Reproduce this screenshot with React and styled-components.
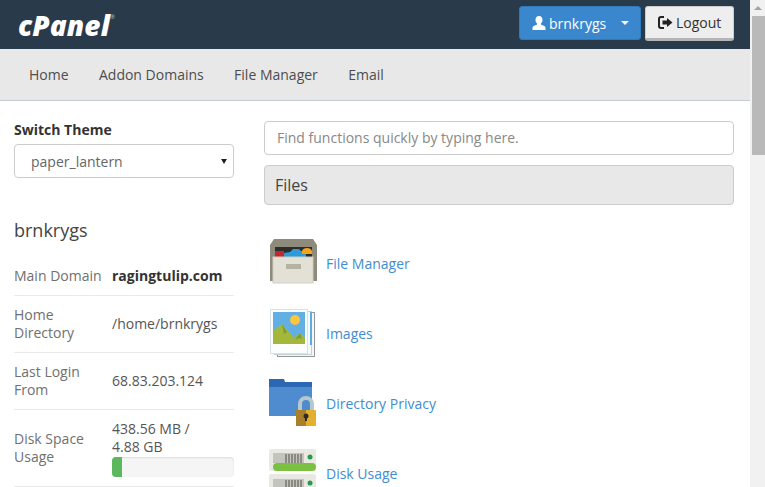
import styled, { createGlobalStyle } from 'styled-components'

const Global = createGlobalStyle`
  html, body { margin: 0; padding: 0; height: 100%; overflow: hidden; background: #fff; }
  body { font-family: "Open Sans", sans-serif; font-size: 14px; color: #444; }
  * { box-sizing: border-box; }
`

const Shell = styled.div`
  display: flex;
  width: 765px;
  height: 487px;
  overflow: hidden;
`
const Page = styled.div`
  width: 750px;
  height: 487px;
  overflow: hidden;
`
const Scrollbar = styled.div`
  width: 15px;
  background: #f1f1f1;
  display: flex;
  flex-direction: column;
  align-items: flex-end;
`
const ScrollArrow = styled.div`
  height: 16px;
  width: 15px;
  display: flex;
  align-items: center;
  justify-content: center;
  &::before {
    content: '';
    border-left: 4px solid transparent;
    border-right: 4px solid transparent;
    border-bottom: 4px solid #a3a3a3;
  }
`
const ScrollThumb = styled.div`
  width: 13px;
  height: 139px;
  background: #b9b9b9;
`

const Header = styled.header`
  height: 49px;
  background: #293a4a;
  display: flex;
  align-items: flex-start;
  justify-content: space-between;
  padding: 6px 16px 0 18px;
`
const Logo = styled.div`
  margin-top: 3px;
  font-size: 28px;
  line-height: 32px;
  font-weight: 800;
  font-style: italic;
  letter-spacing: 0.1px;
  color: #fff;
  sup {
    font-size: 6px;
    font-weight: 400;
    font-style: normal;
    color: #b8c0c8;
    vertical-align: 17px;
    line-height: 0;
  }
`
const HeaderActions = styled.div`
  display: flex;
  gap: 4px;
`
const UserButton = styled.div`
  width: 122px;
  height: 34px;
  background: #3a87cd;
  border: 1px solid #2f79bd;
  border-radius: 3px;
  color: #fff;
  display: flex;
  align-items: center;
  padding-left: 12px;
  gap: 3px;
`
const Caret = styled.span`
  margin-left: 12px;
  border-left: 4px solid transparent;
  border-right: 4px solid transparent;
  border-top: 4px solid #fff;
`
const LogoutButton = styled.div`
  width: 89px;
  height: 35px;
  background: #eee;
  border: 1px solid #ccc;
  border-bottom: 3px solid #b5b5b5;
  border-radius: 3px;
  color: #333;
  display: flex;
  align-items: center;
  padding-left: 12px;
  gap: 3px;
`

const Nav = styled.nav`
  height: 52px;
  background: #e8e8e8;
  border-bottom: 1px solid #c5ccd3;
  display: flex;
  align-items: center;
  gap: 30.4px;
  padding: 0 0 1px 29px;
  a { color: #4d4d4d; }
`

const Content = styled.div`
  display: grid;
  grid-template-columns: 220px 470px;
  column-gap: 30px;
  padding: 0 16px 0 14px;
`
const Sidebar = styled.aside`
  padding-top: 19px;
`
const FieldLabel = styled.div`
  font-weight: 700;
  line-height: 20px;
  color: #333;
  margin-bottom: 4px;
`
const ThemeSelect = styled.div`
  height: 34px;
  border: 1px solid #ccc;
  border-radius: 4px;
  color: #666;
  display: flex;
  align-items: center;
  justify-content: space-between;
  padding: 0 6px 0 16px;
  &::after {
    content: '';
    border-left: 3px solid transparent;
    border-right: 3px solid transparent;
    border-top: 5px solid #222;
  }
`
const UserName = styled.h3`
  margin: 39px 0 13px;
  font-size: 18px;
  font-weight: 400;
  line-height: 26px;
  color: #444;
`
const StatRow = styled.div`
  display: grid;
  grid-template-columns: 98px 1fr;
  align-items: center;
  min-height: ${p => p.$h}px;
  border-bottom: 1px solid #e9e9e9;
  line-height: 18px;
`
const StatLabel = styled.div`
  color: #707070;
`
const StatValue = styled.div`
  color: ${p => (p.$bold ? '#333' : '#555')};
  font-weight: ${p => (p.$bold ? 700 : 400)};
`
const Progress = styled.div`
  height: 20px;
  margin-top: 1px;
  background: #f5f5f5;
  border-radius: 4px;
  box-shadow: inset 0 1px 2px rgba(0, 0, 0, 0.1);
  overflow: hidden;
`
const ProgressFill = styled.div`
  height: 100%;
  background: #5cb85c;
`

const Main = styled.main`
  padding-top: 20px;
`
const Search = styled.div`
  height: 34px;
  border: 1px solid #ccc;
  border-radius: 4px;
  color: #888;
  display: flex;
  align-items: center;
  padding: 0 0 2px 12px;
  margin-bottom: 10px;
`
const SectionHead = styled.div`
  height: 40px;
  background: #e8e8e8;
  border: 1px solid #ccc;
  border-radius: 4px;
  display: flex;
  align-items: center;
  padding-left: 10px;
  font-size: 16px;
  color: #444;
  margin-bottom: 23px;
`
const Feature = styled.a`
  display: flex;
  align-items: center;
  height: 70px;
  gap: 8px;
  padding-left: 4px;
  color: #3f8dd0;
  svg { flex: none; display: block; }
`

const UserIcon = () => (
  <svg width="14" height="14" viewBox="0 0 14 14">
    <path fill="#fff" d="M7 0c2.200 0 3.500 1.700 3.500 3.900 0 1.400-.6 2.800-1.500 3.500-.2.800.1 1.200.8 1.500 1.700.6 3.700 1.200 3.700 3v2.100H.5v-2.100c0-1.800 2-2.400 3.700-3 .7-.3 1-.7.8-1.500-.9-.7-1.500-2.100-1.500-3.500C3.500 1.700 4.800 0 7 0z" />
  </svg>
)

const LogoutIcon = () => (
  <svg width="15" height="13" viewBox="0 0 15 13">
    <path fill="none" stroke="#222" strokeWidth="2" d="M6 1H3a2 2 0 0 0-2 2v7a2 2 0 0 0 2 2h3" />
    <path fill="#222" d="M4.500 4.500h4.500V2l5.500 4.500L9 11V8.500H4.500z" />
  </svg>
)

const FileManagerIcon = () => (
  <svg width="50" height="50" viewBox="0 0 50 50">
    <path fill="#8f8b7c" d="M2 7 6 1h39l4 6v36H2z" />
    <rect x="7" y="9" width="37" height="10" fill="#2d2d2d" />
    <rect x="7" y="13" width="9" height="6" fill="#c0282d" />
    <path fill="#2f9bd6" d="M16 15l6-1 3-3h6l2 2h5v6H16z" />
    <path fill="#f1a51f" d="M34 13c1-4 9-4 10 0v3H34z" />
    <rect x="5" y="19" width="40" height="26" fill="#e3e1d5" stroke="#d0cebf" />
    <rect x="18" y="26" width="15" height="5" fill="#b4b2a3" />
  </svg>
)

const ImagesIcon = () => (
  <svg width="50" height="50" viewBox="0 0 50 50">
    <rect x="9.500" y="4.500" width="37" height="44" fill="#f4f6f7" stroke="#8f979a" />
    <rect x="6.500" y="3.500" width="37" height="43" fill="#f8fbfc" stroke="#c5d0d5" />
    <rect x="42" y="4" width="2" height="33" fill="#5aade3" />
    <rect x="2.500" y="1.500" width="37" height="44" fill="#fbfdfe" stroke="#d8e2e6" />
    <rect x="5" y="4" width="32" height="32" fill="#62b0e3" />
    <circle cx="27" cy="12" r="5" fill="#fbc540" />
    <path fill="#a3b83a" d="M5 23l9-7 12 14 6-5 5 5v6H5z" />
    <path fill="#7d9a36" d="M14 16l2 10 3-2zM32 25l-5 7 4-2 3 1z" />
  </svg>
)

const FolderLockIcon = () => (
  <svg width="50" height="50" viewBox="0 0 50 50">
    <path fill="#2a68b5" d="M1 1h15l1 3h27v6H1z" />
    <path fill="#4f8ccf" d="M1 9h43v29H1z" />
    <path fill="none" stroke="#b5c8cc" strokeWidth="4" d="M32 33v-7a6 6 0 0 1 12 0v7" />
    <rect x="28" y="32" width="20" height="16" rx="1" fill="#e3af2f" />
    <path fill="#ab7e2a" d="M28 32h10v16H28z" />
    <circle cx="38" cy="38" r="2.500" fill="#2b2b2b" />
    <rect x="37" y="38" width="2" height="5" fill="#2b2b2b" />
  </svg>
)

const DiskIcon = () => (
  <svg width="50" height="50" viewBox="0 0 50 50">
    <rect x="1" y="1" width="47" height="22" rx="2" fill="#e9e9e3" />
    <rect x="5" y="5" width="31" height="10" fill="#c4c4be" />
    <path stroke="#77776f" strokeWidth="1.500" d="M18 6v9M21 6v9M24 6v9M27 6v9M30 6v9M33 6v9" />
    <circle cx="42" cy="9" r="2.500" fill="#2a9a4a" />
    <rect x="5" y="15" width="43" height="8" rx="4" fill="#7cc042" />
    <rect x="1" y="26" width="47" height="22" rx="2" fill="#e9e9e3" />
    <rect x="5" y="31" width="31" height="10" fill="#c4c4be" />
    <path stroke="#77776f" strokeWidth="1.500" d="M18 32v9M21 32v9M24 32v9M27 32v9M30 32v9M33 32v9" />
    <circle cx="42" cy="35" r="2.500" fill="#2a9a4a" />
  </svg>
)

const features = [
  { name: 'File Manager', Icon: FileManagerIcon },
  { name: 'Images', Icon: ImagesIcon },
  { name: 'Directory Privacy', Icon: FolderLockIcon },
  { name: 'Disk Usage', Icon: DiskIcon },
]

const App = () => (
  <Shell>
    <Global />
    <Page>
      <Header>
        <Logo>cPanel<sup>®</sup></Logo>
        <HeaderActions>
          <UserButton><UserIcon /> brnkrygs <Caret /></UserButton>
          <LogoutButton><LogoutIcon /> Logout</LogoutButton>
        </HeaderActions>
      </Header>
      <Nav>
        <a>Home</a>
        <a>Addon Domains</a>
        <a>File Manager</a>
        <a>Email</a>
      </Nav>
      <Content>
        <Sidebar>
          <FieldLabel>Switch Theme</FieldLabel>
          <ThemeSelect>paper_lantern</ThemeSelect>
          <UserName>brnkrygs</UserName>
          <StatRow $h={40}>
            <StatLabel>Main Domain</StatLabel>
            <StatValue $bold>ragingtulip.com</StatValue>
          </StatRow>
          <StatRow $h={57}>
            <StatLabel>Home Directory</StatLabel>
            <StatValue>/home/brnkrygs</StatValue>
          </StatRow>
          <StatRow $h={57}>
            <StatLabel>Last Login From</StatLabel>
            <StatValue>68.83.203.124</StatValue>
          </StatRow>
          <StatRow $h={77}>
            <StatLabel>Disk Space Usage</StatLabel>
            <StatValue>
              438.56 MB /<br />4.88 GB
              <Progress><ProgressFill style={{ width: '8%' }} /></Progress>
            </StatValue>
          </StatRow>
        </Sidebar>
        <Main>
          <Search>Find functions quickly by typing here.</Search>
          <SectionHead>Files</SectionHead>
          {features.map(({ name, Icon }) => (
            <Feature key={name}>
              <Icon />
              {name}
            </Feature>
          ))}
        </Main>
      </Content>
    </Page>
    <Scrollbar>
      <ScrollArrow />
      <ScrollThumb />
    </Scrollbar>
  </Shell>
)

export default App
